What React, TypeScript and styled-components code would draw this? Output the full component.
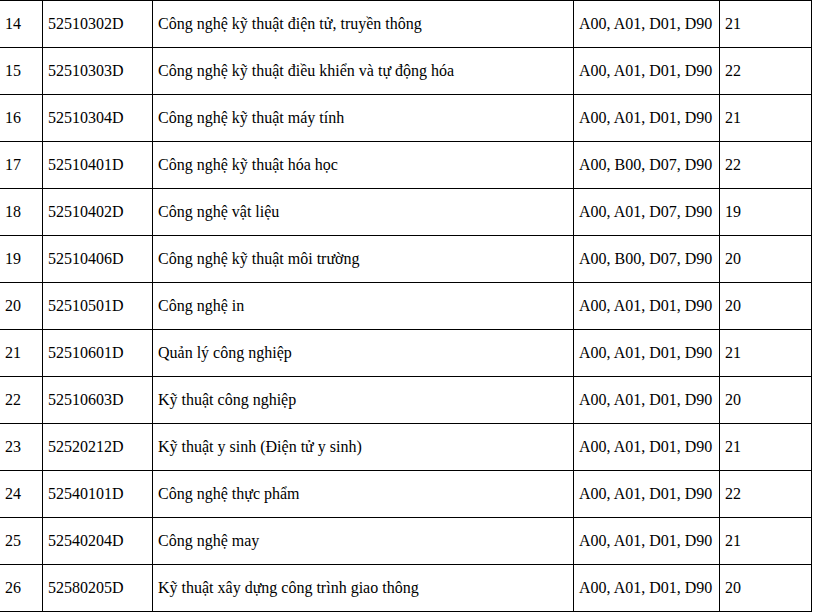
import React from "react"
import styled, { createGlobalStyle } from "styled-components"

const GlobalStyle = createGlobalStyle`
    html, body {
        margin: 0;
        padding: 0;
        background: #ffffff;
        overflow: hidden;
    }
`

type Row = {
    no: number
    code: string
    name: string
    groups: string
    score: number
}

const rows: Row[] = [
    { no: 14, code: "52510302D", name: "Công nghệ kỹ thuật điện tử, truyền thông", groups: "A00, A01, D01, D90", score: 21 },
    { no: 15, code: "52510303D", name: "Công nghệ kỹ thuật điều khiển và tự động hóa", groups: "A00, A01, D01, D90", score: 22 },
    { no: 16, code: "52510304D", name: "Công nghệ kỹ thuật máy tính", groups: "A00, A01, D01, D90", score: 21 },
    { no: 17, code: "52510401D", name: "Công nghệ kỹ thuật hóa học", groups: "A00, B00, D07, D90", score: 22 },
    { no: 18, code: "52510402D", name: "Công nghệ vật liệu", groups: "A00, A01, D07, D90", score: 19 },
    { no: 19, code: "52510406D", name: "Công nghệ kỹ thuật môi trường", groups: "A00, B00, D07, D90", score: 20 },
    { no: 20, code: "52510501D", name: "Công nghệ in", groups: "A00, A01, D01, D90", score: 20 },
    { no: 21, code: "52510601D", name: "Quản lý công nghiệp", groups: "A00, A01, D01, D90", score: 21 },
    { no: 22, code: "52510603D", name: "Kỹ thuật công nghiệp", groups: "A00, A01, D01, D90", score: 20 },
    { no: 23, code: "52520212D", name: "Kỹ thuật y sinh (Điện tử y sinh)", groups: "A00, A01, D01, D90", score: 21 },
    { no: 24, code: "52540101D", name: "Công nghệ thực phẩm", groups: "A00, A01, D01, D90", score: 22 },
    { no: 25, code: "52540204D", name: "Công nghệ may", groups: "A00, A01, D01, D90", score: 21 },
    { no: 26, code: "52580205D", name: "Kỹ thuật xây dựng công trình giao thông", groups: "A00, A01, D01, D90", score: 20 },
]

const colWidths = [43, 110, 421, 146, 92]

const App: React.FC = () => (
    <>
        <GlobalStyle />
        <Table>
            <colgroup>
                {colWidths.map((w, i) => (
                    <col key={i} style={{ width: w }} />
                ))}
            </colgroup>
            <tbody>
                {rows.map(r => (
                    <tr key={r.no}>
                        <Cell>{r.no}</Cell>
                        <Cell>{r.code}</Cell>
                        <Cell>{r.name}</Cell>
                        <Cell>{r.groups}</Cell>
                        <Cell>{r.score}</Cell>
                    </tr>
                ))}
            </tbody>
        </Table>
    </>
)

export default App

const Table = styled.table`
    border-collapse: collapse;
    table-layout: fixed;
    width: 812px;
    margin-left: -1px;
    font-family: "Liberation Serif", "Times New Roman", serif;
    font-size: 16px;
    color: #000000;
`

const Cell = styled.td`
    border: 1px solid #000000;
    height: 47px;
    padding: 0 5px;
    box-sizing: border-box;
    vertical-align: middle;
    white-space: nowrap;
    overflow: hidden;
`
